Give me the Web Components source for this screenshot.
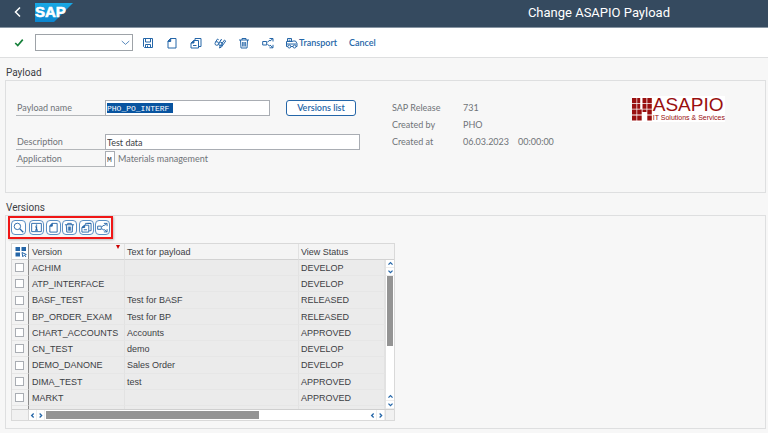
<!DOCTYPE html>
<html lang="en">
<head>
<meta charset="utf-8">
<title>Change ASAPIO Payload</title>
<style>
  html { --ink: #3c4044; --muted: #6f7377; --blue: #2566a8; --line: #dedfe0; --page: #f7f7f7; --field: #a9adb3; }
  body { margin: 0; background: var(--page); color: var(--ink); font-family: Lato, Roboto, sans-serif; font-size: 9px; line-height: 12px; }
</style>
</head>
<body>
<payload-app></payload-app>
<script>
const RESET = '*{box-sizing:border-box;margin:0}button{font:inherit;color:inherit;background:none;border:0;padding:0;display:flex;align-items:center;justify-content:center}input{font:inherit;color:inherit;border-radius:0;outline:0;min-width:0}';
function define(name, css, html) {
  customElements.define(name, class extends HTMLElement {
    constructor() {
      super();
      this.attachShadow({ mode: 'open' }).innerHTML =
        `<style>${RESET}${css}</style>` + (typeof html === 'function' ? html(this) : html);
    }
  });
}

/* Icons share a 12-unit box and take the current colour. */
const ICONS = {
  back: '<path d="M8 1.5 3.5 6 8 10.5" stroke-width="1.5"/>',
  check: '<path d="M1.5 6 4.5 9 10.5 2" stroke-width="2"/>',
  save: '<path d="M1.5 1.5h9v9h-8l-1-1z"/><path d="M3.5 1.5v3.5h5V1.5M3.5 10.5V7.500h5v3M5.500 8.500v2"/>',
  doc: '<path d="M4.500 1.500h5.500v9.500H2V4z"/><path d="M2 4.500 4.700 1.500v3z" fill="currentColor"/>',
  docs: '<path d="M5 3V1.500h6v8H9M7 1.500h4"/><path d="M4 3.500h4.500v7.500H1V6z"/><path d="M1 6 4 3.500V6zM3 8.500h3.500" fill="currentColor"/>',
  glasses: '<circle cx="2.800" cy="6.500" r="1.800"/><circle cx="6.600" cy="7" r="1.800"/><path d="M1.500 5 3.500 2l1.200.8M5.500 5.500 7 2.500l1 .5M5.500 11l.7-2.200L10.500 3l1.200 1L7.500 10z"/>',
  trash: '<path d="M1 3h10M4 3V1.500h4V3M2.500 3l.5 8h6l.5-8M4.700 5v4.500M6 5v4.500M7.300 5v4.500"/>',
  nodes: '<path d="M.700 4.500h4v3.500h-4zM5.500 5 8 3.200M5.500 7.500 8 9.200"/><path d="M7.500 1.500h3.500v3M7.500 10.800h3.500v-3M11 1.500 8 4M11 10.800 8 8"/>',
  truck: '<path d="M1.500 4.500V1.500h4v3M.500 4.500h6V4h3l1.500 2.500V9.500H.500zM2.500 3.200h2M.500 7h10"/><circle cx="3.300" cy="9.500" r="1.500" fill="#fff"/><circle cx="8.500" cy="9.500" r="1.500" fill="#fff"/>',
  search: '<circle cx="4.800" cy="4.800" r="3.500"/><path d="M7.500 7.500 11.200 11.200" stroke-width="1.500"/>',
  info: '<path d="M.700 1.500h10.600v9H.700z"/><path d="M6 2.600v1.400M4.700 5.300H6v3.500M4.500 8.800h3" stroke-width="1.400"/>',
  down: '<path d="M1 4 6 8.500 11 4"/>',
  select: '<path d="M.500 1h4.500v4H.500zM6.500 1H11v4H6.500zM.500 6.500h4.500v4H.500z" fill="currentColor" stroke="none"/><path d="M7 6.500l4.300 2-1.800.7 1.500 1.800M7 6.500l.8 4.300 1.200-1.500"/>',
  aup: '<path d="M2.500 8 6 4.500 9.500 8" stroke-width="2.200"/>',
  adown: '<path d="M2.500 4.500 6 8 9.500 4.500" stroke-width="2.200"/>',
  aleft: '<path d="M8 2.500 4.500 6 8 9.500" stroke-width="2.200"/>',
  aright: '<path d="M4.500 2.500 8 6 4.500 9.500" stroke-width="2.200"/>'
};
define('ui-icon', ':host{display:block;width:12px;height:12px}svg{display:block;width:100%;height:100%}',
  el => `<svg viewBox="0 0 12 12" fill="none" stroke="currentColor" aria-hidden="true">${ICONS[el.getAttribute('name')]}</svg>`);

define('sap-logo', ':host{display:block;width:38px;height:19px}svg{display:block}text{font:bold 15px "Liberation Sans",sans-serif;fill:#fff;stroke:#fff;stroke-width:.6}',
  '<svg width="38" height="19" viewBox="0 0 38 19"><defs><linearGradient id="g" x2="0" y2="1"><stop stop-color="#19a9e5"/><stop offset="1" stop-color="#0b85cf"/></linearGradient></defs><path d="M0 0h38L19 19H0z" fill="url(#g)"/><text x="0" y="14">SAP</text></svg>');

define('app-header', `
  :host{display:grid;grid-template-columns:1fr auto;align-items:center;height:28px;padding:0 98px 0 12px;background:#354a5f;border-bottom:1px solid #8795a3;color:#fff}
  nav{display:flex;align-items:center;gap:11px;padding-bottom:3px}
  h1{font:400 13px/18px Roboto,sans-serif;padding-bottom:2px}`,
  '<nav><button aria-label="Back"><ui-icon name="back"></ui-icon></button><sap-logo></sap-logo></nav><h1>Change ASAPIO Payload</h1>');

define('app-toolbar', `
  :host{display:flex;align-items:center;height:30px;padding:0 14px;background:#fff;border-bottom:1px solid var(--line);color:var(--blue);font-weight:600}
  .ok{color:#16803a;width:10px;margin-right:11px}
  .cmd{display:flex;align-items:center;width:98px;height:17px;border:1px solid #9ea3a8;margin-right:9px}
  .cmd input{flex:1;width:0;border:0;background:none;padding:0 2px}
  .cmd button{width:14px}.cmd ui-icon{width:9px;height:9px}
  .set{display:flex;gap:12px}
  .text{gap:1px;margin-right:12px}`,
  `<button class="ok" aria-label="Enter"><ui-icon name="check"></ui-icon></button>
   <div class="cmd"><input aria-label="Command"><button aria-label="Command history"><ui-icon name="down"></ui-icon></button></div>
   <div class="set">
     <button aria-label="Save"><ui-icon name="save"></ui-icon></button>
     <button aria-label="New"><ui-icon name="doc"></ui-icon></button>
     <button aria-label="Copy"><ui-icon name="docs"></ui-icon></button>
     <button aria-label="Display or change"><ui-icon name="glasses"></ui-icon></button>
     <button aria-label="Delete"><ui-icon name="trash"></ui-icon></button>
     <button aria-label="Where used"><ui-icon name="nodes"></ui-icon></button>
     <button class="text"><ui-icon name="truck"></ui-icon>Transport</button>
   </div><button>Cancel</button>`);

define('group-box', `
  :host{display:block}
  h2{font:400 10px/12px Roboto,sans-serif;margin:0 0 1px 1px}
  div{border:1px solid var(--line)}`,
  el => `<section><h2>${el.getAttribute('heading')}</h2><div><slot></slot></div></section>`);

define('form-field', `
  :host{display:flex;height:16px;align-items:center}
  label{width:89px;height:16px;line-height:16px;padding-left:1px;border-bottom:1px solid #b4b7ba;color:var(--muted)}
  input{height:16px;border:1px solid var(--field);background:#fff;padding:0 1px}
  .mono{font:8px/12px "Liberation Mono",monospace}
  .marked{color:#fff;background:linear-gradient(#0854a0,#0854a0) 1px 50%/66px 10px no-repeat #fff}`,
  el => `<label for="f">${el.getAttribute('label')}</label><input id="f" class="${el.getAttribute('look') || ''}" value="${el.getAttribute('value')}" style="width:${el.getAttribute('size')}px"><slot></slot>`);

define('push-button', `
  :host{display:block}
  button{width:70px;height:16px;border:1px solid var(--blue);border-radius:3px;background:#fff;color:var(--blue);font-weight:600}`,
  '<button><slot></slot></button>');

define('company-logo', `
  :host{display:grid;grid-template-columns:21px auto;align-items:start;height:26px;background:#fff;color:#990f0f;font-family:"Liberation Sans",sans-serif}
  svg{display:block;margin-top:2px}
  b{display:block;font-size:19px;font-weight:400;line-height:18px}
  small{display:block;font-size:7px;line-height:8px;white-space:nowrap}`,
  `<svg width="21" height="23" viewBox="0 0 21 23" fill="currentColor"><path d="M0 0h4.500v5H0zM5.200 0h3v5h-3zM10.500 0h4v5h-4zM15.300 0h4.500v5h-4.500zM0 5.800h4.500v5H0zM5.200 5.800h3v5h-3zM10.500 5.800h4v5h-4zM15.300 5.800h4.500v5h-4.500zM0 11.600h4.500v5H0zM5.200 11.600h4.500v5H5.200zM10.500 11.600h4v2.500h-4zM15.300 11.600h4.500v5h-4.500zM0 17.400h4.500v5H0zM5.200 17.400h4.500v5H5.200zM15.300 17.400h4.500v5h-4.500z"/></svg>
   <div><b>ASAPIO</b><small>IT Solutions &amp; Services</small></div>`);

define('payload-form', `
  :host{display:flex;align-items:flex-start;padding:19px 40px 25px 10px}
  .fields,dl{display:grid;grid-auto-rows:16px;row-gap:1px;align-content:start}
  .fields{width:345px;margin-right:31px}
  .third{grid-row:3}.fourth{grid-row:4}
  push-button{margin-left:16px}
  span{margin-left:3px;color:var(--muted)}
  dl{grid-template-columns:71px 55px auto;line-height:16px;color:var(--muted)}
  dt{grid-column:1}
  company-logo{margin:-4px 0 0 auto}`,
  `<div class="fields">
     <form-field label="Payload name" value="PHO_PO_INTERF" size="165" look="mono marked"><push-button>Versions list</push-button></form-field>
     <form-field class="third" label="Description" value="Test data" size="255"></form-field>
     <form-field class="fourth" label="Application" value="M" size="10" look="mono"><span>Materials management</span></form-field>
   </div>
   <dl><dt>SAP Release</dt><dd>731</dd><dt>Created by</dt><dd>PHO</dd><dt>Created at</dt><dd>06.03.2023</dd><dd>00:00:00</dd></dl>
   <company-logo></company-logo>`);

define('version-tools', `
  :host{display:flex;gap:3px;width:105px;height:23px;padding:2px 1px;border:2px solid #f01616;box-shadow:1px 1px 2px #8888;color:var(--blue)}
  div{flex:1;display:flex;justify-content:space-between}
  button{width:15px;height:15px;border:1px solid #5b8fc4;border-radius:4px;background:#fff}
  ui-icon{width:11px;height:11px}`,
  `<button aria-label="Details"><ui-icon name="search"></ui-icon></button>
   <div><button aria-label="Information"><ui-icon name="info"></ui-icon></button>
   <button aria-label="New version"><ui-icon name="doc"></ui-icon></button>
   <button aria-label="Delete version"><ui-icon name="trash"></ui-icon></button>
   <button aria-label="Copy version"><ui-icon name="docs"></ui-icon></button>
   <button aria-label="Where used"><ui-icon name="nodes"></ui-icon></button></div>`);

define('scroll-bar', `
  :host{display:flex;background:#fff;color:var(--blue)}
  :host([vertical]){flex-direction:column}
  button{flex:none;width:8px;height:100%;border-right:1px solid #eee}
  ui-icon{width:7px;height:7px}
  :host([vertical]) button{width:100%;height:8px;border:0;border-bottom:1px solid #eee}
  .track{flex:1;display:flex;padding:1px}
  :host([vertical]) .track{flex-direction:column;padding:0 1px}
  i{background:#949494}`,
  el => {
    const v = el.hasAttribute('vertical'), a = v ? 'aup' : 'aleft', b = v ? 'adown' : 'aright';
    const pair = `<button aria-label="Scroll back"><ui-icon name="${a}"></ui-icon></button><button aria-label="Scroll forward"><ui-icon name="${b}"></ui-icon></button>`;
    return `${pair}<div class="track"><i style="flex:0 0 ${el.getAttribute('thumb')}%"></i></div>${pair}`;
  });

const ROWS = [['ACHIM', '', 'DEVELOP'], ['ATP_INTERFACE', '', 'DEVELOP'], ['BASF_TEST', 'Test for BASF', 'RELEASED'],
  ['BP_ORDER_EXAM', 'Test for BP', 'RELEASED'], ['CHART_ACCOUNTS', 'Accounts', 'APPROVED'], ['CN_TEST', 'demo', 'DEVELOP'],
  ['DEMO_DANONE', 'Sales Order', 'DEVELOP'], ['DIMA_TEST', 'test', 'APPROVED'], ['MARKT', '', 'APPROVED']];
define('version-table', `
  :host{display:grid;grid-template-columns:1fr 9px;max-width:384px;border:1px solid #d9d9d9;background:#f1f1f1;font-family:"Liberation Sans",sans-serif}
  table{width:100%;table-layout:fixed;border-collapse:separate;border-spacing:0}
  th,td{height:16px;padding:0 0 0 3px;border-right:1px solid #e2e2e2;border-bottom:1px solid #e6e6e6;text-align:left;font-weight:400;line-height:12px;white-space:nowrap}
  th{background:#f4f4f4;border-bottom-color:#d2d2d2}
  td{background:#ebebeb}
  th+th+th,td+td+td{padding-left:2px}
  tbody tr:nth-child(4n+3) td{height:17px}
  tr>:first-child{width:17px;padding:0 0 0 3px;border-right-color:#8c8c8c;background:#f3f3f3}
  th:first-child{background:#fff}
  .ver{width:96px;position:relative}.sta{width:86px;border-right:0}
  .ver::after{content:"";position:absolute;right:4px;top:1px;border:2px solid transparent;border-top:4px solid #c00;border-bottom:0}
  .end td{height:3px;border-bottom:0;line-height:0}
  input{appearance:none;display:block;width:9px;height:9px;border:1px solid var(--field);background:#fff}
  th button{color:var(--blue)}
  aside{display:grid;grid-template-rows:16px 1fr}
  aside b{background:#f4f4f4;border-bottom:1px solid #d2d2d2}
  aside scroll-bar{border-left:1px solid #e2e2e2}
  footer{grid-column:1/-1;display:grid;grid-template-columns:17px 1fr 9px;height:11px;border-top:1px solid #cfcfcf}
  footer b{border-right:1px solid #d6d6d6}footer b:last-child{border:0;border-left:1px solid #ddd}`,
  `<table>
     <thead><tr><th><button aria-label="Select all"><ui-icon name="select"></ui-icon></button></th><th class="ver">Version</th><th>Text for payload</th><th class="sta">View Status</th></tr></thead>
     <tbody>${ROWS.map(r => `<tr><td><input type="checkbox" aria-label="Select ${r[0]}"></td>${r.map(c => `<td>${c}</td>`).join('')}</tr>`).join('')}
     <tr class="end"><td></td><td></td><td></td><td></td></tr></tbody>
   </table>
   <aside><b></b><scroll-bar vertical thumb="60"></scroll-bar></aside>
   <footer><b></b><scroll-bar thumb="66"></scroll-bar><b></b></footer>`);

define('payload-app', `
  :host{display:block}
  main{display:grid;gap:9px;padding:9px 2px 4px 5px}
  version-tools{margin:0 0 4px 2px}
  version-table{margin:0 5px 7px}`,
  `<app-header></app-header><app-toolbar></app-toolbar>
   <main>
     <group-box heading="Payload"><payload-form></payload-form></group-box>
     <group-box heading="Versions"><version-tools></version-tools><version-table></version-table></group-box>
   </main>`);
</script>
</body>
</html>
